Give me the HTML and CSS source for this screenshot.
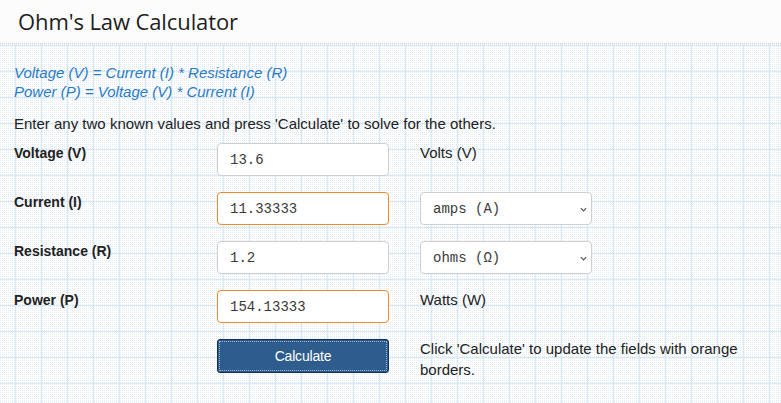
FILE: index.html
```html
<!DOCTYPE html>
<html lang="en">
<head>
<meta charset="utf-8">
<title>Ohm's Law Calculator</title>
<link rel="stylesheet" href="styles.css">
</head>
<body>
<header class="topbar">
  <h1 class="title">Ohm's Law Calculator</h1>
</header>
<main class="calc">
  <p class="formulas">Voltage (V) = Current (I) * Resistance (R)<br>Power (P) = Voltage (V) * Current (I)</p>
  <p class="intro">Enter any two known values and press 'Calculate' to solve for the others.</p>
  <form class="fields">
    <label class="field-label" for="v">Voltage (V)</label>
    <input class="field" id="v" type="text" value="13.6">
    <span class="unit">Volts (V)</span>

    <label class="field-label" for="i">Current (I)</label>
    <input class="field field-out" id="i" type="text" value="11.33333">
    <div class="select-wrap">
      <select class="unit-select"><option>amps (A)</option></select>
      <svg class="chevron" viewBox="0 0 8 5" width="7" height="5"><path d="M1 1 L4 4 L7 1" fill="none" stroke="#555" stroke-width="1.4"/></svg>
    </div>

    <label class="field-label" for="r">Resistance (R)</label>
    <input class="field" id="r" type="text" value="1.2">
    <div class="select-wrap">
      <select class="unit-select"><option>ohms (Ω)</option></select>
      <svg class="chevron" viewBox="0 0 8 5" width="7" height="5"><path d="M1 1 L4 4 L7 1" fill="none" stroke="#555" stroke-width="1.4"/></svg>
    </div>

    <label class="field-label" for="p">Power (P)</label>
    <input class="field field-out" id="p" type="text" value="154.13333">
    <span class="unit">Watts (W)</span>

    <span></span>
    <button class="calc-btn" type="button">Calculate</button>
    <p class="help">Click 'Calculate' to update the fields with orange borders.</p>
  </form>
</main>
</body>
</html>
```

FILE: styles.css
```css
html, body {
  margin: 0;
  padding: 0;
}

body {
  width: 781px;
  min-height: 403px;
  color: #222;
  font-family: "Liberation Sans", Arial, sans-serif;
  background-color: #ffffff;
  /* graph paper: 26px ruled squares over a fine 2px dot screen */
  background-image:
    linear-gradient(to right, #d9e9f6 1px, transparent 1px),
    linear-gradient(to bottom, #d9e9f6 1px, transparent 1px),
    conic-gradient(at 1px 1px, transparent 270deg, #e2edf7 0);
  background-size: 26px 26px, 26px 26px, 2px 2px;
  background-position: 15px 19px, 15px 19px, 0 0;
}

.topbar {
  height: 43px;
  background: #fcfcfc;
  border-bottom: 1px dotted #d6d6d6;
  padding: 0 18px;
}

.title {
  margin: 0;
  font-family: "Open Sans", "Liberation Sans", sans-serif;
  font-weight: 400;
  font-size: 22px;
  line-height: 43px;
  color: #1e1e1e;
  letter-spacing: -0.1px;
}

.calc {
  padding: 19px 8px 0 14px;
}

.formulas {
  margin: 0;
  color: #2b7bc3;
  font-style: italic;
  font-size: 15px;
  line-height: 19px;
}

.intro {
  margin: 13px 0 0;
  font-size: 15px;
  line-height: 19px;
}

.fields {
  margin-top: 10px;
  display: grid;
  grid-template-columns: 172px 172px 1fr;
  grid-auto-rows: 33px;
  column-gap: 31px;
  row-gap: 16px;
}

.field-label {
  font-weight: 700;
  font-size: 14px;
  line-height: 20px;
  white-space: nowrap;
}

.field,
.unit-select {
  box-sizing: border-box;
  width: 172px;
  height: 33px;
  margin: 0;
  padding: 0 12px;
  border: 1px solid #cfcfcf;
  border-radius: 4px;
  background: #fff;
  font-family: "Liberation Mono", "DejaVu Sans Mono", monospace;
  font-size: 14px;
  color: #3a3a3a;
  outline: none;
}

.field-out {
  border-color: #f0892a;
}

.unit {
  font-size: 15px;
  line-height: 20px;
}

.select-wrap {
  position: relative;
  width: 172px;
}

.unit-select {
  appearance: none;
  -webkit-appearance: none;
}

.chevron {
  position: absolute;
  right: 5px;
  top: 15px;
  pointer-events: none;
}

.calc-btn {
  box-sizing: border-box;
  width: 172px;
  height: 34px;
  margin: 0;
  padding: 0;
  background: #2e5c8c;
  border: 1px solid #16314f;
  border-radius: 3px;
  outline: 1px dotted #9ab6d4;
  outline-offset: -3px;
  color: #fff;
  font-family: "Liberation Sans", Arial, sans-serif;
  font-size: 14px;
  letter-spacing: -0.2px;
}

.help {
  margin: -1px 0 0;
  width: 356px;
  font-size: 15px;
  line-height: 21px;
}
```
